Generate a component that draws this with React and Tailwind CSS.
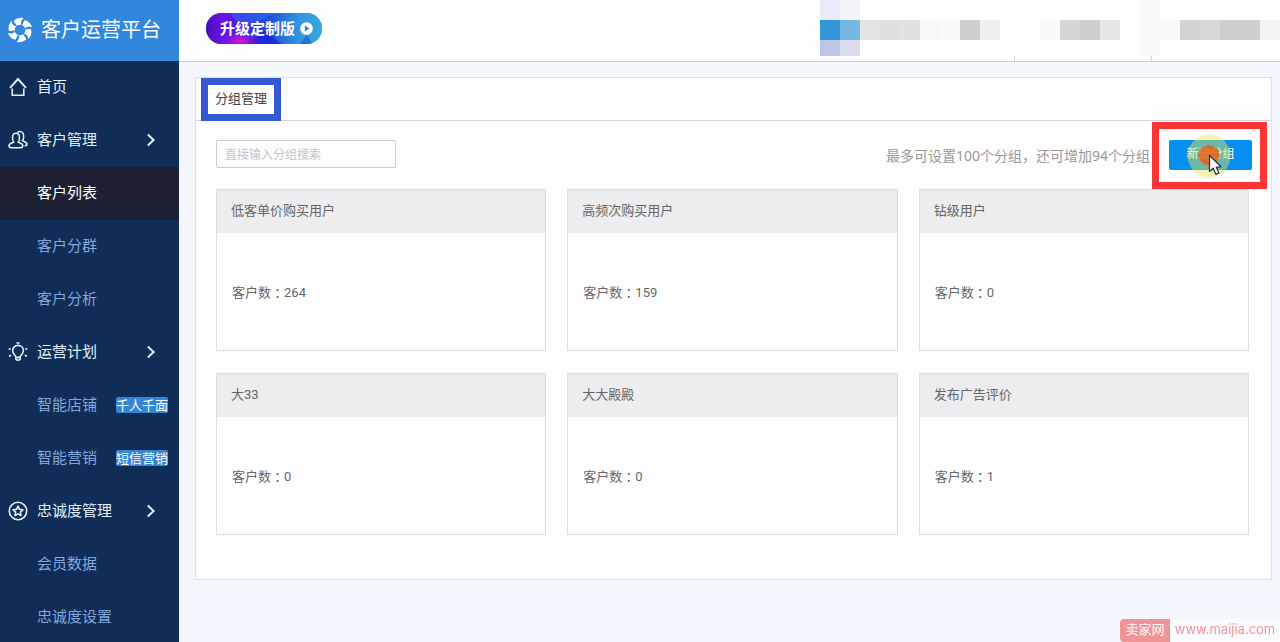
import React from 'react';

// --- SIDEBAR ICONS ---
const LogoIcon = () => (
    <svg viewBox="-13 -13 26 26" className="w-[26px] h-[26px] shrink-0" fill="white" aria-hidden="true">
        {[0, 60, 120, 180, 240, 300].map((angle) => (
            <path
                key={angle}
                transform={`rotate(${angle})`}
                d="M-3 -4.2 L-6.3 -8.7 C-4.5 -11.5 0 -12.8 3.6 -11.8 C1 -9.8 0.2 -7.4 1.4 -5.2 C-0.2 -5.6 -1.6 -5.2 -3 -4.2Z"
            />
        ))}
    </svg>
);

const HomeIcon = () => (
    <svg viewBox="0 0 20 20" className="w-5 h-5 shrink-0" fill="none" stroke="currentColor" strokeWidth="1.6" aria-hidden="true">
        <path d="M2 10.8 L10 2 L18 10.8" strokeWidth="2" />
        <path d="M4.2 11.6 V18.3 H15.8 V11.6" />
    </svg>
);

const UsersIcon = () => (
    <svg viewBox="0 0 20 20" className="w-5 h-5 shrink-0" fill="none" stroke="currentColor" strokeWidth="1.5" strokeLinejoin="round" aria-hidden="true">
        <path d="M8 3.2 C5.8 3.2 4.6 4.8 4.6 7 V9.2 C4.6 10.6 5.2 11.6 5.9 12.2 C5.4 13 1 12.8 1 15.6 C1 17 1.8 17.7 3 17.7 H12.6 C14 17.7 14.8 17 14.8 15.6 C14.8 12.9 10.6 13 10.1 12.2 C10.9 11.6 11.4 10.6 11.4 9.2 V7 C11.4 4.8 10.2 3.2 8 3.2Z" />
        <path d="M9.4 2.6 C12 0.4 15.6 2 15.6 5.4 V7.6 C15.6 9 15.2 10 14.4 10.6 C15 11.6 19 11.6 19 14 C19 15.2 18 15.8 16.6 15.8" />
    </svg>
);

const BulbIcon = () => (
    <svg viewBox="0 0 20 20" className="w-5 h-5 shrink-0" fill="none" stroke="currentColor" strokeWidth="1.6" aria-hidden="true">
        <path d="M7.8 15.2 C7.8 13 4.6 12.2 4.6 8.6 C4.6 5.6 7 3.4 10 3.4 C13 3.4 15.4 5.6 15.4 8.6 C15.4 12.2 12.2 13 12.2 15.2 V16.6 C12.2 17.6 11.2 18.2 10 18.2 C8.8 18.2 7.8 17.6 7.8 16.6Z" />
        <path d="M7.8 15.4 H12.2 M8.4 1 H11.6 M0.6 7 H2.8 M17.2 7 H19.4 M1 14.2 L3.2 13.2 M19 14.2 L16.8 13.2" />
    </svg>
);

const StarIcon = () => (
    <svg viewBox="0 0 20 20" className="w-5 h-5 shrink-0" fill="none" stroke="currentColor" strokeWidth="1.6" strokeLinejoin="round" aria-hidden="true">
        <circle cx="10" cy="10" r="8.7" />
        <path d="M10 5.2 L11.5 8.3 L14.9 8.8 L12.4 11.1 L13 14.5 L10 12.9 L7 14.5 L7.6 11.1 L5.1 8.8 L8.5 8.3Z" />
    </svg>
);

const ChevronIcon = () => (
    <svg viewBox="0 0 10 14" className="w-[10px] h-[14px] ml-auto mr-[23px]" fill="none" stroke="currentColor" strokeWidth="2" aria-hidden="true">
        <path d="M1.8 1.5 L7.6 7 L1.8 12.5" />
    </svg>
);

// --- PAGE DATA ---
const menu = [
    { label: '首页', icon: <HomeIcon /> },
    { label: '客户管理', icon: <UsersIcon />, group: true },
    { label: '客户列表', active: true },
    { label: '客户分群' },
    { label: '客户分析' },
    { label: '运营计划', icon: <BulbIcon />, group: true },
    { label: '智能店铺', badge: '千人千面' },
    { label: '智能营销', badge: '短信营销' },
    { label: '忠诚度管理', icon: <StarIcon />, group: true },
    { label: '会员数据' },
    { label: '忠诚度设置' },
];

const groups = [
    { name: '低客单价购买用户', count: 264 },
    { name: '高频次购买用户', count: 159 },
    { name: '钻级用户', count: 0 },
    { name: '大33', count: 0 },
    { name: '大大殿殿', count: 0 },
    { name: '发布广告评价', count: 1 },
];

// Masked account area, one column per 20px block: [top, middle, bottom]
const mosaic = [
    ['bg-[#e9ebf6]', 'bg-[#3398d9]', 'bg-[#bdc4e4]'],
    ['bg-[#f4f5fb]', 'bg-[#75b8e2]', 'bg-[#dadcee]'],
    ['', 'bg-[#e4e4e5]', ''],
    ['', 'bg-[#dfdfe0]', ''],
    ['', 'bg-[#e2e2e3]', ''],
    ['', 'bg-[#f9f8f9]', ''],
    ['', 'bg-[#fbfafb]', ''],
    ['', 'bg-[#cfcfd0]', ''],
    ['', 'bg-[#efeff0]', ''],
    ['', '', ''],
    ['', '', ''],
    ['', 'bg-[#fafafa]', ''],
    ['', 'bg-[#d6d6d8]', ''],
    ['', 'bg-[#cfcfd0]', ''],
    ['', 'bg-[#e7e7e8]', ''],
    ['', '', ''],
    ['bg-[#fafafa]', 'bg-[#fafafa]', 'bg-[#fafafa]'],
    ['', 'bg-[#f9f9fa]', ''],
    ['', 'bg-[#d3d3d4]', ''],
    ['', 'bg-[#d8d8d9]', ''],
    ['', 'bg-[#cfcfd0]', ''],
    ['', 'bg-[#cfcfd0]', ''],
    ['', 'bg-[#f4f4f4]', ''],
];

const Sidebar = () => (
    <aside className="w-[179px] shrink-0 bg-[#0f2d57]">
        <div className="h-[61px] pl-[7px] pb-[2px] flex items-center gap-2 bg-[#3087dc] text-white text-xl">
            <LogoIcon />
            <span className="whitespace-nowrap">客户运营平台</span>
        </div>
        <nav>
            {menu.map((item) => (
                <a
                    key={item.label}
                    href="#"
                    className={`h-[53px] pl-2 pb-[2px] flex items-center text-[15px] ${
                        item.active
                            ? 'bg-[#1d2033] text-white'
                            : item.icon
                              ? 'text-[#e4f0fc]'
                              : 'text-[#83a7dc]'
                    }`}
                >
                    <span className="w-[29px] shrink-0 flex">{item.icon}</span>
                    <span className="whitespace-nowrap">{item.label}</span>
                    {item.group && <ChevronIcon />}
                    {item.badge && (
                        <span className="ml-auto mr-[11px] h-4 flex items-center rounded-xs bg-[#3485d6] text-white text-[13px] leading-4 whitespace-nowrap">
                            {item.badge}
                        </span>
                    )}
                </a>
            ))}
        </nav>
    </aside>
);

const TopBar = () => (
    <header className="h-[62px] pl-[27px] flex items-start justify-between bg-[#fefefe] border-b border-[#cfccd2]">
        <button
            type="button"
            className="relative mt-[13px] h-[31px] w-[116px] pl-[14px] flex items-center gap-[5px] rounded-full overflow-hidden bg-[#2360dc] text-white text-[15px] font-bold whitespace-nowrap"
        >
            <svg viewBox="0 0 116 31" className="absolute inset-0 w-full h-full" aria-hidden="true">
                <defs>
                    <linearGradient id="pill" x1="0" x2="1">
                        <stop offset="0" stopColor="#4a0fb4" />
                        <stop offset="0.14" stopColor="#6a12e8" />
                        <stop offset="0.32" stopColor="#3c1fe8" />
                        <stop offset="0.55" stopColor="#2350dc" />
                        <stop offset="0.8" stopColor="#2f96de" />
                        <stop offset="1" stopColor="#38a8e2" />
                    </linearGradient>
                    <radialGradient id="glow">
                        <stop offset="0" stopColor="#f010c8" />
                        <stop offset="1" stopColor="#8a10e0" stopOpacity="0" />
                    </radialGradient>
                </defs>
                <rect width="116" height="31" fill="url(#pill)" />
                <path d="M24 0 H70 L44 12 L30 8Z" fill="#2a7ae8" opacity="0.5" />
                <path d="M40 31 L58 18 L76 31Z" fill="#1418e0" opacity="0.6" />
                <ellipse cx="34" cy="28" rx="22" ry="11" fill="url(#glow)" />
                <path d="M94 31 L101 22 L106 31Z" fill="#1d5fc4" opacity="0.7" />
            </svg>
            <span className="relative">升级定制版</span>
            <svg viewBox="0 0 14 14" className="relative w-[13px] h-[13px]" aria-hidden="true">
                <circle cx="7" cy="7" r="6.8" fill="white" />
                <path d="M5.2 3.8 L10.2 7 L5.2 10.2Z" fill="#2a84d8" />
            </svg>
        </button>
        <div className="relative flex h-[61px]" aria-hidden="true">
            {mosaic.map(([top, middle, bottom], i) => (
                <div key={i} className="w-5">
                    <div className={`h-5 ${top}`} />
                    <div className={`h-5 ${middle}`} />
                    <div className={`h-4 ${bottom}`} />
                </div>
            ))}
            <span className="absolute bottom-0 right-[265px] w-px h-[5px] bg-[#d6d4d8]" />
            <span className="absolute bottom-0 right-[128px] w-px h-[5px] bg-[#d6d4d8]" />
        </div>
    </header>
);

const GroupCard = ({ group }) => (
    <article className="h-[162px] flex flex-col border border-[#dedee2] font-[Roboto,'Noto_Sans_CJK_SC',sans-serif]">
        <h2 className="h-[43px] px-[14px] pb-[2px] flex items-center bg-[#edecee]">{group.name}</h2>
        <p className="flex-1 px-[15px] pt-[2px] flex items-center">
            客户数<span className="font-['Noto_Sans_CJK_TC',sans-serif]">：</span>{group.count}
        </p>
    </article>
);

// Yellow halo with the orange click burst and the pointer
const ClickMarker = () => (
    <svg viewBox="0 0 44 46" className="absolute left-[18px] -top-[6px] w-11 h-[46px] pointer-events-none" aria-hidden="true">
        <circle cx="22" cy="22" r="21.5" fill="#e9e84f" opacity="0.45" />
        <path
            d="M21 11 L26 12 L31 16 L33 22 L30 28 L26 31 L18 31 L13 27 L11 21 L14 14Z"
            fill="#e8601c"
            opacity="0.85"
        />
        <path
            d="M22.5 21.5 V37.5 L26.2 34.2 L29 40.4 L32 39 L29.2 33.2 L34 32.8Z"
            fill="white"
            stroke="#303040"
            strokeWidth="1.2"
            strokeLinejoin="round"
        />
    </svg>
);

const App = () => {
    return (
        <div className="h-screen overflow-hidden flex bg-[#f4f7fe] font-['Noto_Sans','Noto_Sans_CJK_SC',sans-serif]">
            <Sidebar />

            <div className="flex-1 min-w-0">
                <TopBar />

                <main className="pt-[15px] pl-4 pr-2">
                    <section className="bg-[#fefdfe] border border-[#dfdfe5] text-[13px] text-[#666666]">
                        {/* Tab row */}
                        <div className="h-[43px] pl-[5px] flex border-b border-[#d3d2d7]">
                            <button
                                type="button"
                                className="relative -mb-px pb-[2px] w-20 text-[#444444]"
                            >
                                分组管理
                                <span className="absolute inset-0 border-[7px] border-[#3459d3]" />
                            </button>
                        </div>

                        <div className="pt-[19px] pl-5 pr-[22px] pb-11">
                            {/* Search and create */}
                            <div className="-mr-[3px] h-[49px] flex items-start">
                                <input
                                    type="text"
                                    aria-label="分组搜索"
                                    placeholder="直接输入分组搜索"
                                    className="w-[180px] h-7 px-2 rounded-xs border border-[#cbcad0] text-xs placeholder:text-[#c4c4c8] outline-none"
                                />
                                <p className="ml-auto mr-[19px] h-[31px] flex items-center text-sm text-[#999999]">
                                    最多可设置100个分组，还可增加94个分组
                                </p>
                                <div className="relative">
                                    <button type="button" className="w-[83px] h-[30px] pb-[2px] rounded-xs bg-[#068ff0] text-white text-xs">
                                        新建分组
                                    </button>
                                    <ClickMarker />
                                    <span className="absolute -left-[17px] -right-[15px] -top-[18px] -bottom-[19px] border-[7px] border-[#fb3436] pointer-events-none" />
                                </div>
                            </div>

                            {/* Group cards */}
                            <div className="grid grid-cols-3 gap-x-[21px] gap-y-[22px]">
                                {groups.map((group) => (
                                    <GroupCard key={group.name} group={group} />
                                ))}
                            </div>
                        </div>
                    </section>
                </main>
            </div>

            {/* Site mark */}
            <a href="#" className="fixed right-0 bottom-0 h-[23px] flex items-center text-[13px]">
                <span className="h-full w-[50px] pb-[2px] flex items-center justify-center rounded-l-sm bg-[#f09496] text-white">卖家网</span>
                <span className="h-full w-[110px] pb-[2px] flex items-center justify-center bg-[#fafbff] text-[#f09496] font-[Inter,sans-serif]">
                    www.maijia.com
                </span>
            </a>
        </div>
    );
};

export default App;
